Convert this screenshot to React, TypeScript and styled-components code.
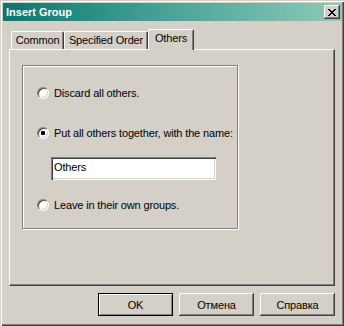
import React from "react";
import styled, { createGlobalStyle } from "styled-components";

const GlobalStyle = createGlobalStyle`
  html, body {
    margin: 0;
    padding: 0;
    background: #d4d0c8;
  }
  body {
    font-family: "Liberation Sans", Arial, sans-serif;
    font-size: 11px;
    letter-spacing: -0.15px;
    color: #000;
  }
`;

const raised = `
  box-shadow: inset -1px -1px #404040, inset 1px 1px #fff, inset -2px -2px #808080;
`;

const Window = styled.div`
  width: 344px;
  height: 326px;
  box-sizing: border-box;
  background: #d4d0c8;
  padding: 3px 2px 2px 3px;
  box-shadow: inset 1px 1px #d4d0c8, inset 2px 2px #fff, inset -1px -1px #404040, inset -2px -2px #808080;
  display: flex;
  flex-direction: column;
`;

const TitleBar = styled.div`
  height: 18px;
  display: flex;
  align-items: center;
  justify-content: space-between;
  padding: 0 2px 0 3px;
  background: linear-gradient(90deg, #0a766e 0%, #4aa598 50%, #8ec9b9 100%);
  color: #fff;
  font-weight: bold;
  letter-spacing: 0;
`;

const CloseButton = styled.div`
  width: 16px;
  height: 14px;
  box-sizing: border-box;
  background: #d4d0c8;
  display: flex;
  align-items: center;
  justify-content: center;
  ${raised}
`;

const Body = styled.div`
  flex: 1;
  display: flex;
  flex-direction: column;
  padding: 8px 7px 0 6px;
`;

const TabStrip = styled.div`
  display: flex;
  align-items: flex-end;
  height: 21px;
  margin-bottom: -1px;
  padding-left: 2px;
  position: relative;
  z-index: 1;
`;

const Tab = styled.div<{ $active?: boolean; $w: number }>`
  width: ${(p) => p.$w}px;
  height: ${(p) => (p.$active ? 21 : 18)}px;
  margin-bottom: ${(p) => (p.$active ? 0 : 1)}px;
  box-sizing: border-box;
  background: #d4d0c8;
  border-top: 1px solid #fff;
  border-left: 1px solid #fff;
  border-right: 1px solid #404040;
  border-radius: 2px 2px 0 0;
  box-shadow: inset -1px 0 #808080;
  padding-top: 2px;
  line-height: 13px;
  text-align: center;
  white-space: nowrap;
`;

const Panel = styled.div`
  height: 237px;
  box-sizing: border-box;
  border: 1px solid;
  border-color: #fff #404040 #404040 #fff;
  box-shadow: inset -1px -1px #808080;
  padding: 15px 0 0 12px;
`;

const GroupBox = styled.div`
  width: 216px;
  height: 164px;
  box-sizing: border-box;
  border: 1px solid #808080;
  box-shadow: inset 1px 1px #fff, 1px 1px #fff;
  padding: 20px 0 0 14px;
  display: flex;
  flex-direction: column;
`;

const Option = styled.label<{ $top: number }>`
  display: flex;
  align-items: center;
  gap: 5px;
  height: 14px;
  line-height: 14px;
  margin-top: ${(p) => p.$top}px;
  white-space: nowrap;
`;

const Radio = styled.span<{ $checked?: boolean }>`
  width: 12px;
  height: 12px;
  box-sizing: border-box;
  border-radius: 50%;
  background: #fff;
  border: 1px solid;
  border-color: #808080 #fff #fff #808080;
  box-shadow: inset 1px 1px #404040, inset -1px -1px #d4d0c8;
  display: flex;
  align-items: center;
  justify-content: center;
  &::after {
    content: "";
    width: 4px;
    height: 4px;
    border-radius: 1px;
    background: ${(p) => (p.$checked ? "#000" : "transparent")};
  }
`;

const NameInput = styled.input`
  margin: 17px 0 0 14px;
  width: 165px;
  height: 23px;
  box-sizing: border-box;
  border: 0;
  outline: none;
  background: #fff;
  padding: 3px 3px 7px;
  font: inherit;
  letter-spacing: inherit;
  line-height: 13px;
  color: #000;
  box-shadow: inset 1px 1px #808080, inset 2px 2px #404040, inset -1px -1px #fff, inset -2px -2px #d4d0c8;
`;

const Footer = styled.div`
  display: flex;
  justify-content: flex-end;
  gap: 6px;
  margin-top: 7px;
`;

const Button = styled.button<{ $default?: boolean }>`
  width: 75px;
  height: 23px;
  box-sizing: border-box;
  background: #d4d0c8;
  font: inherit;
  letter-spacing: inherit;
  color: #000;
  padding: 0;
  border: ${(p) => (p.$default ? "1px solid #000" : "0")};
  box-shadow: ${(p) =>
    p.$default
      ? "inset 1px 1px #fff, inset -1px -1px #808080"
      : "inset -1px -1px #404040, inset 1px 1px #fff, inset -2px -2px #808080"};
`;

const CloseGlyph = () => (
  <svg width="8" height="7" viewBox="0 0 8 7" shapeRendering="crispEdges">
    <path
      fill="#000"
      d="M0 0h2v1h-2z M6 0h2v1h-2z M1 1h2v1h-2z M5 1h2v1h-2z M2 2h4v1h-4z M3 3h2v1h-2z M2 4h4v1h-4z M1 5h2v1h-2z M5 5h2v1h-2z M0 6h2v1h-2z M6 6h2v1h-2z"
    />
  </svg>
);

export default function App() {
  return (
    <>
      <GlobalStyle />
      <Window>
        <TitleBar>
          <span>Insert Group</span>
          <CloseButton>
            <CloseGlyph />
          </CloseButton>
        </TitleBar>
        <Body>
          <TabStrip>
            <Tab $w={53}>Common</Tab>
            <Tab $w={84}>Specified Order</Tab>
            <Tab $w={46} $active>
              Others
            </Tab>
          </TabStrip>
          <Panel>
            <GroupBox>
              <Option $top={0}>
                <Radio />
                <span>Discard all others.</span>
              </Option>
              <Option $top={26}>
                <Radio $checked />
                <span>Put all others together, with the name:</span>
              </Option>
              <NameInput defaultValue="Others" />
              <Option $top={18}>
                <Radio />
                <span>Leave in their own groups.</span>
              </Option>
            </GroupBox>
          </Panel>
          <Footer>
            <Button $default>OK</Button>
            <Button>Отмена</Button>
            <Button>Справка</Button>
          </Footer>
        </Body>
      </Window>
    </>
  );
}
